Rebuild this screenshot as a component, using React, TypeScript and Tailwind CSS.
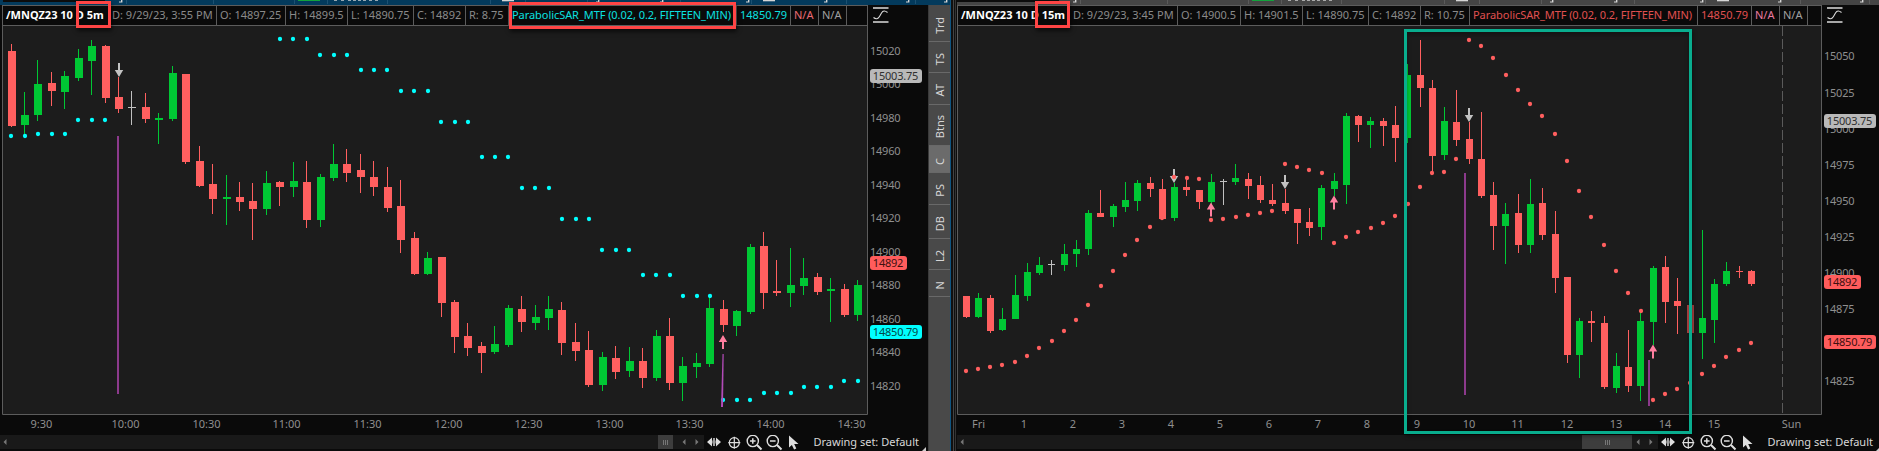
import React from "react";

type Candle = [number, "R" | "G" | "N", number, number, number, number];
type Point = [number, number];

const COLORS = { R: "#ff5f5f", G: "#00c734", N: "#c0c0c0" };

const leftCandles: Candle[] = [
  [8, "R", 51, 126, 44, 127], [21, "G", 115, 125, 92, 134], [34, "G", 84, 115, 60, 121], [48, "R", 83, 91, 72, 106],
  [61, "G", 76, 92, 71, 109], [75, "G", 58, 78, 49, 81], [88, "G", 46, 61, 40, 95], [102, "R", 46, 98, 45, 103],
  [115, "R", 97, 109, 77, 113], [128, "N", 107, 108, 91, 125], [142, "R", 107, 119, 93, 123], [155, "G", 118, 120, 113, 144],
  [169, "G", 73, 119, 66, 121], [182, "R", 74, 162, 74, 164], [196, "R", 161, 186, 146, 187], [209, "R", 184, 199, 164, 214],
  [223, "G", 197, 199, 175, 225], [236, "R", 197, 202, 182, 211], [249, "R", 201, 209, 183, 240], [263, "G", 183, 209, 171, 215],
  [276, "R", 182, 187, 181, 206], [290, "G", 181, 187, 162, 197], [303, "R", 182, 220, 161, 228], [317, "G", 177, 220, 174, 227],
  [330, "G", 164, 178, 144, 181], [343, "R", 164, 173, 149, 182], [357, "R", 170, 177, 154, 193], [370, "R", 177, 187, 161, 196],
  [384, "R", 187, 208, 167, 212], [397, "R", 206, 240, 180, 253], [411, "R", 238, 274, 232, 275], [424, "G", 258, 274, 252, 275],
  [438, "R", 257, 303, 257, 317], [451, "R", 302, 337, 300, 353], [464, "R", 336, 348, 323, 356], [478, "R", 346, 353, 342, 373],
  [491, "G", 344, 352, 326, 354], [505, "G", 308, 345, 305, 347], [518, "R", 309, 322, 296, 332], [532, "G", 317, 323, 305, 330],
  [545, "G", 309, 318, 296, 330], [558, "R", 310, 343, 302, 355], [572, "R", 342, 351, 323, 361], [585, "R", 350, 385, 331, 387],
  [599, "G", 357, 385, 352, 391], [612, "R", 358, 372, 346, 379], [626, "G", 361, 371, 347, 377], [639, "R", 361, 378, 348, 388],
  [653, "G", 336, 378, 330, 381], [666, "R", 336, 383, 318, 390], [679, "G", 366, 383, 357, 401], [693, "G", 363, 367, 353, 378],
  [706, "G", 308, 364, 297, 367], [720, "R", 309, 325, 300, 332], [733, "G", 311, 326, 310, 336], [747, "G", 247, 312, 244, 314],
  [760, "R", 246, 293, 232, 309], [773, "R", 291, 293, 260, 296], [787, "G", 285, 293, 248, 307], [800, "G", 278, 286, 258, 295],
  [814, "R", 277, 292, 273, 295], [827, "G", 289, 291, 278, 322], [841, "R", 289, 315, 284, 317], [854, "G", 285, 315, 280, 321],
];

const rightCandles: Candle[] = [
  [963, "R", 296, 317, 296, 318], [975, "G", 298, 317, 293, 318], [987, "R", 298, 331, 295, 333], [999, "G", 319, 330, 308, 331],
  [1012, "G", 295, 319, 275, 319], [1024, "G", 272, 296, 263, 301], [1036, "G", 265, 273, 257, 275], [1048, "N", 264, 265, 260, 275],
  [1061, "G", 254, 265, 244, 271], [1073, "G", 249, 254, 240, 267], [1085, "G", 213, 249, 210, 255], [1097, "R", 213, 217, 190, 217],
  [1110, "G", 206, 217, 204, 227], [1122, "G", 200, 207, 182, 212], [1134, "G", 183, 201, 180, 211], [1147, "R", 183, 189, 177, 197],
  [1159, "R", 189, 219, 179, 220], [1171, "G", 187, 218, 183, 221], [1183, "R", 187, 190, 180, 196], [1196, "R", 190, 202, 190, 209],
  [1208, "G", 182, 202, 174, 205], [1220, "N", 181, 182, 179, 205], [1232, "G", 178, 182, 164, 185], [1245, "R", 179, 186, 173, 199],
  [1257, "R", 185, 200, 176, 203], [1269, "R", 200, 204, 184, 206], [1282, "R", 203, 211, 189, 214], [1294, "R", 209, 223, 209, 244],
  [1306, "R", 222, 228, 208, 236], [1318, "G", 188, 227, 185, 240], [1331, "G", 181, 189, 173, 196], [1343, "G", 116, 185, 113, 204],
  [1355, "R", 116, 125, 115, 142], [1367, "G", 121, 125, 117, 148], [1380, "R", 121, 126, 118, 146], [1392, "R", 125, 138, 106, 162],
  [1404, "G", 75, 138, 64, 143], [1417, "R", 75, 88, 40, 107], [1429, "R", 88, 156, 80, 173], [1441, "G", 121, 155, 107, 160],
  [1453, "R", 122, 140, 90, 146], [1466, "R", 139, 159, 122, 164], [1478, "R", 159, 196, 112, 198], [1490, "R", 195, 226, 182, 250],
  [1502, "G", 214, 226, 203, 264], [1515, "R", 213, 245, 194, 253], [1527, "G", 204, 245, 179, 253], [1539, "R", 203, 235, 188, 240],
  [1552, "R", 234, 278, 211, 293], [1564, "R", 277, 355, 277, 363], [1576, "G", 321, 355, 318, 378], [1588, "R", 321, 323, 311, 342],
  [1601, "R", 323, 387, 316, 389], [1613, "G", 366, 388, 353, 393], [1625, "R", 367, 386, 330, 392], [1637, "G", 321, 386, 311, 401],
  [1650, "G", 268, 322, 266, 345], [1662, "R", 267, 302, 256, 323], [1674, "R", 301, 306, 278, 334], [1687, "R", 305, 333, 305, 333],
  [1699, "G", 318, 333, 230, 359], [1711, "G", 284, 320, 279, 343], [1723, "G", 271, 284, 262, 286], [1736, "R", 271, 272, 266, 278],
  [1748, "R", 271, 284, 270, 286],
];

const leftDots: Point[] = [
  [11, 136], [25, 136], [38, 134], [52, 134], [65, 134], [78, 120], [92, 120], [105, 120],
  [280, 39], [293, 39], [307, 39], [320, 55], [334, 55], [347, 55], [361, 70], [374, 70], [387, 70],
  [401, 91], [414, 91], [428, 91], [441, 122], [455, 122], [468, 122], [482, 157], [495, 157], [508, 157],
  [522, 188], [535, 188], [549, 188], [562, 219], [576, 219], [589, 219], [602, 250], [616, 250], [629, 250],
  [643, 275], [656, 275], [670, 275], [683, 296], [697, 296], [710, 296], [723, 400], [737, 400], [750, 400],
  [764, 393], [777, 393], [791, 393], [804, 387], [817, 387], [831, 387], [844, 381], [858, 381],
];

const rightDots: Point[] = [
  [966, 371], [978, 369], [990, 367], [1002, 365], [1015, 362], [1027, 356], [1039, 348], [1052, 341], [1064, 331],
  [1076, 320], [1088, 305], [1101, 286], [1113, 271], [1125, 255], [1137, 240], [1150, 227], [1162, 218], [1174, 177],
  [1187, 178], [1199, 179], [1211, 220], [1223, 219], [1236, 217], [1248, 215], [1260, 213], [1272, 211], [1285, 164],
  [1297, 167], [1309, 170], [1322, 173], [1334, 243], [1346, 237], [1358, 232], [1371, 228], [1383, 223], [1395, 216],
  [1408, 204], [1420, 187], [1432, 173], [1444, 172], [1456, 159], [1469, 40], [1481, 46], [1493, 58], [1506, 75],
  [1518, 90], [1530, 104], [1542, 116], [1555, 134], [1567, 161], [1579, 191], [1591, 217], [1604, 245], [1616, 271],
  [1628, 293], [1641, 311], [1653, 400], [1665, 394], [1677, 389], [1690, 383], [1702, 374], [1714, 366], [1726, 357],
  [1739, 350], [1751, 343],
];

function Candles({ data, width }: { data: Candle[]; width: number }) {
  return (
    <g shapeRendering="crispEdges">
      {data.map(([x, c, top, bottom, high, low]) => (
        <g key={x} fill={COLORS[c]}>
          <rect x={x + 3} y={high} width={1} height={low - high} />
          <rect x={x} y={top} width={width} height={bottom - top} />
        </g>
      ))}
    </g>
  );
}

function Dots({ data, color }: { data: Point[]; color: string }) {
  return (
    <g fill={color}>
      {data.map(([x, y]) => (
        <circle key={x} cx={x} cy={y} r={2.15} />
      ))}
    </g>
  );
}

function DownArrow({ x, y }: { x: number; y: number }) {
  return <path d={`M${x - 1} ${y}h2v7h3.200l-4.200 7l-4.200 -7h3.200z`} fill="#c2c2c2" />;
}

function UpArrow({ x, y }: { x: number; y: number }) {
  return <path d={`M${x} ${y}l4.200 7h-3.200v7h-2v-7h-3.200z`} fill="#ff7f9f" />;
}

function ScaleIcon({ x }: { x: number }) {
  return (
    <g stroke="#dcdcdc" fill="none">
      <path d={`M${x} 8h15.500M${x} 22h15.500`} strokeWidth={1.6} />
      <path d={`M${x + 0.5} 17.500c2.500 2 4.500 1.500 6 -1l2 -3.500c1.500 -2.500 3.500 -2.500 6 -0.500`} strokeWidth={1.1} />
    </g>
  );
}

function Badge({ x, y, w, fill, color, text }: { x: number; y: number; w: number; fill: string; color: string; text: string }) {
  return (
    <g>
      <rect x={x} y={y} width={w} height={14} rx={3} fill={fill} />
      <text x={x + 2.8} y={y + 11} fill={color} textLength={w - 6.4} lengthAdjust="spacing">
        {text}
      </text>
    </g>
  );
}

function AxisLabels({ x, labels }: { x: number; labels: [string, number][] }) {
  return (
    <g fill="#8f8f8f">
      {labels.map(([t, y]) => (
        <text key={t} x={x} y={y + 4} textLength={30.5} lengthAdjust="spacing">
          {t}
        </text>
      ))}
    </g>
  );
}

function TimeLabels({ labels }: { labels: [string, number][] }) {
  return (
    <g fill="#8f8f8f" textAnchor="middle">
      {labels.map(([t, x]) => (
        <text key={t} x={x} y={428}>
          {t}
        </text>
      ))}
    </g>
  );
}

const chartText = "block shrink-0 font-['Noto_Sans','Open_Sans',sans-serif] text-[11px]";

function LeftChart() {
  return (
    <svg className={chartText} width={928} height={409} viewBox="0 26 928 409">
      <rect x={2} y={26} width={865} height={388} fill="#1c1c1c" />
      <path d="M2.500 26V414.500H867.500V26" fill="none" stroke="#5c5c5c" />
      <Candles data={leftCandles} width={8} />
      <rect x={117} y={136} width={2} height={258} fill="#8c3a8c" />
      <Dots data={leftDots} color="#00ffff" />
      <path d="M722.500 354h1.200l-.7 53h-2z" fill="#b24bb8" />
      <DownArrow x={119} y={63} />
      <UpArrow x={723} y={335} />
      <AxisLabels
        x={870}
        labels={[["15020", 51], ["15000", 84], ["14980", 118], ["14960", 151], ["14940", 185], ["14920", 218], ["14900", 252], ["14880", 285], ["14860", 319], ["14840", 352], ["14820", 386]]}
      />
      <Badge x={870} y={69} w={52} fill="#b9b9b9" color="#303030" text="15003.75" />
      <Badge x={870} y={256} w={37} fill="#ff5c5c" color="#401010" text="14892" />
      <Badge x={870} y={325} w={52} fill="#00ffff" color="#004848" text="14850.79" />
      <TimeLabels
        labels={[["9:30", 41.5], ["10:00", 125.5], ["10:30", 206.5], ["11:00", 286.5], ["11:30", 367.5], ["12:00", 448.5], ["12:30", 528.5], ["13:00", 609.5], ["13:30", 689.5], ["14:00", 770.5], ["14:30", 851.5]]}
      />
    </svg>
  );
}

function RightChart() {
  return (
    <svg className={chartText} width={922} height={409} viewBox="957 26 922 409">
      <rect x={957} y={26} width={865} height={388} fill="#1c1c1c" />
      <path d="M957.500 26V414.500H1821.500V26" fill="none" stroke="#5c5c5c" />
      <path d="M1782.500 26V414" stroke="#5a5a5a" strokeDasharray="10 3" />
      <Candles data={rightCandles} width={7} />
      <rect x={1687} y={305} width={2} height={28} fill="#b04444" />
      <rect x={1692} y={305} width={2} height={28} fill="#b04444" />
      <rect x={1464} y={173} width={2} height={222} fill="#8c3a8c" />
      <rect x={1648} y={360} width={2} height={46} fill="#8c3a8c" />
      <DownArrow x={1174} y={169} />
      <DownArrow x={1285} y={175} />
      <DownArrow x={1469} y={108} />
      <Dots data={rightDots} color="#ff5f5f" />
      <UpArrow x={1211} y={202.5} />
      <UpArrow x={1334} y={195.5} />
      <UpArrow x={1653} y={344.5} />
      <AxisLabels
        x={1824}
        labels={[["15050", 56], ["15025", 93], ["15000", 129], ["14975", 165], ["14950", 201], ["14925", 237], ["14900", 273], ["14875", 309], ["14825", 381]]}
      />
      <Badge x={1824} y={114} w={52} fill="#b9b9b9" color="#303030" text="15003.75" />
      <Badge x={1824} y={275} w={37} fill="#ff5c5c" color="#401010" text="14892" />
      <Badge x={1824} y={335} w={52} fill="#ff5c5c" color="#401010" text="14850.79" />
      <TimeLabels
        labels={[["Fri", 978.5], ["1", 1024], ["2", 1073], ["3", 1122], ["4", 1171], ["5", 1220], ["6", 1269], ["7", 1318], ["8", 1367], ["9", 1417], ["10", 1469], ["11", 1517.5], ["12", 1567], ["13", 1616], ["14", 1665], ["15", 1714], ["Sun", 1791.5]]}
      />
    </svg>
  );
}

function Cell({ w, color = "text-[#8a8a8a]", children }: { w: string; color?: string; children?: React.ReactNode }) {
  return <div className={`${w} ${color} h-full shrink-0 border-r border-[#5c5c5c] pl-[3px] leading-[18px] whitespace-nowrap`}>{children}</div>;
}

const headerRow = "flex h-[21px] shrink-0 border-y border-l border-[#5c5c5c] bg-[#0a0a0a] text-[11px]";

function LeftHeader() {
  return (
    <div className="flex h-[21px] bg-[#0a0a0a] pl-[2px]">
      <div className={`${headerRow} w-[866px] border-r`}>
        <div className="w-[109px] pl-[3px] font-bold leading-[18px] text-white whitespace-pre">/MNQZ23 10 D 5m</div>
        <div className="w-[105px] border-r border-[#5c5c5c] leading-[18px] text-[#8a8a8a] whitespace-nowrap">D: 9/29/23, 3:55 PM</div>
        <Cell w="w-[69px]">O: 14897.25</Cell>
        <Cell w="w-[62px]">H: 14899.5</Cell>
        <Cell w="w-[66px]">L: 14890.75</Cell>
        <Cell w="w-[52px]">C: 14892</Cell>
        <Cell w="w-[43px]">R: 8.75</Cell>
        <Cell w="w-[228px] tracking-[-0.06px]" color="text-[#0be0e0]">ParabolicSAR_MTF (0.02, 0.2, FIFTEEN_MIN)</Cell>
        <Cell w="w-[54px]" color="text-[#0be0e0]">14850.79</Cell>
        <Cell w="w-[28px]" color="text-[#ea6a74]">N/A</Cell>
        <Cell w="w-[28px]" color="text-[#a0a0a0]">N/A</Cell>
      </div>
      <svg width={60} height={21} viewBox="868 5 60 21" className="block">
        <ScaleIcon x={873} />
      </svg>
    </div>
  );
}

function RightHeader() {
  return (
    <div className="flex h-[21px] bg-[#0a0a0a]">
      <div className={`${headerRow} w-[865px] border-r`}>
        <div className="w-[115px] pl-[3px] font-bold leading-[18px] text-white whitespace-pre">/MNQZ23 10 D 15m</div>
        <div className="w-[105px] border-r border-[#5c5c5c] leading-[18px] text-[#8a8a8a] whitespace-nowrap">D: 9/29/23, 3:45 PM</div>
        <Cell w="w-[63px]">O: 14900.5</Cell>
        <Cell w="w-[62px]">H: 14901.5</Cell>
        <Cell w="w-[66px]">L: 14890.75</Cell>
        <Cell w="w-[52px]">C: 14892</Cell>
        <Cell w="w-[49px]">R: 10.75</Cell>
        <Cell w="w-[228px] tracking-[-0.06px]" color="text-[#e05050]">ParabolicSAR_MTF (0.02, 0.2, FIFTEEN_MIN)</Cell>
        <Cell w="w-[54px]" color="text-[#e05050]">14850.79</Cell>
        <Cell w="w-[28px]" color="text-[#ea7aa0]">N/A</Cell>
        <Cell w="w-[28px]" color="text-[#a0a0a0]">N/A</Cell>
      </div>
      <svg width={57} height={21} viewBox="1822 5 57 21" className="block">
        <ScaleIcon x={1827} />
      </svg>
    </div>
  );
}

function Tools() {
  return (
    <svg width={100} height={16} viewBox="704 435 100 16" className="block shrink-0">
      <g fill="#dedede">
        <path d="M707 442l5 -4.500v9zM721 442l-5 -4.500v9z" />
        <path d="M711.500 440.500h1v3h-1zM713.300 438h1.400v8h-1.400zM715.500 440.500h1v3h-1z" />
        <path d="M789 435.500v12l2.900 -2.500l2.200 4.500l2.200 -1l-2.100 -4.400h4.300z" />
      </g>
      <g fill="none" stroke="#dedede" strokeWidth={1.2}>
        <circle cx={734.3} cy={442.7} r={5} />
        <path d="M728.300 442.700h12M734.300 436.700v12" />
        <circle cx={752.8} cy={441} r={5.6} strokeWidth={1.4} />
        <circle cx={772.8} cy={441} r={5.6} strokeWidth={1.4} />
        <path d="M757 445l4.500 4.500M777 445l4.500 4.500" strokeWidth={2} />
        <path d="M750 441h5.600M752.800 438.200v5.600M770 441h5.600" strokeWidth={1.5} />
      </g>
    </svg>
  );
}

function Arrow({ flip }: { flip?: boolean }) {
  return (
    <svg width={4} height={6} viewBox="0 0 4 6" className="block shrink-0">
      <path d={flip ? "M0.500 0v6L3.500 3z" : "M3.500 0v6L0.500 3z"} fill="#777" />
    </svg>
  );
}

function Grip() {
  return (
    <div className="flex gap-[1px]">
      <i className="h-[5px] w-px bg-[#777]" />
      <i className="h-[5px] w-px bg-[#777]" />
      <i className="h-[5px] w-px bg-[#777]" />
    </div>
  );
}

function BottomBar({ track, thumb, arrows }: { track: string; thumb: string; arrows: string }) {
  return (
    <div className="flex h-[16px] shrink-0 bg-[#0a0a0a]">
      <div className="flex h-[14px] shrink-0 items-center bg-[#191919]">
        <div className={`${track} pl-[3px]`}><Arrow /></div>
        <div className={`${thumb} flex h-[14px] items-center justify-center bg-[#3d3d3d]`}><Grip /></div>
        <div className={`${arrows} flex gap-[9px]`}><Arrow /><Arrow flip /></div>
      </div>
      <Tools />
      <div className="w-[118px] shrink-0 pl-[9.500px] text-[11px] leading-[14px] text-[#d8d8d8] whitespace-nowrap">Drawing set: Default</div>
      <svg width={5} height={16} viewBox="0 0 5 16" className="block shrink-0">
        <path d="M4 12v4H0z" fill="#ccc" />
      </svg>
    </div>
  );
}

function Tab({ h, label, active }: { h: string; label: string; active?: boolean }) {
  return (
    <div className={`${h} flex items-center justify-center border-b border-[#696969] pt-[4px] ${active ? "bg-[#6b6b6b]" : "bg-[#494949]"}`}>
      <span className="rotate-180 text-[11px] leading-[14px] text-[#d6d6d6] [writing-mode:vertical-rl]">{label}</span>
    </div>
  );
}

function TopEdge({ x0, w, right }: { x0: number; w: number; right?: boolean }) {
  const d = right ? 954 : 0;
  return (
    <svg width={w} height={5} viewBox={`${x0} 0 ${w} 5`} className="block shrink-0">
      <rect x={x0} width={w} height={5} fill={right ? "#454545" : "#033a5c"} />
      <rect x={d + 3} width={102} height={2} fill="#0c0c0c" />
      <g fill={right ? "#5b5b5b" : "#1c5172"}>
        {[126, 213, 294, 327, 387, 490, 525, 587, 680, 751, 846, 915].map((x) => (
          <rect key={x} x={d + x} width={1} height={4} />
        ))}
      </g>
      <rect x={d + 298} width={22} height={1} fill="#12a33c" />
      <g fill="#d5d5d5">
        {[119, 596, 660, 746, 824, 906, 944].filter((x) => d + x < 1875).map((x) => (
          <path key={x} d={`M${d + x + 2} 0h1.400v2.500h-3.400v-1h2z`} />
        ))}
        <rect x={d + 502} width={12} height={1.3} />
        <rect x={d + 763} width={12} height={1.3} />
        {[334, 341, 348, 353, 358, 363, 369, 375].map((x) => (
          <rect key={x} x={d + x} width={3} height={1} opacity={0.7} />
        ))}
      </g>
    </svg>
  );
}

const redBox = "absolute border-[#ff4545] shadow-[1px_3px_4px_rgba(0,0,0,0.55)]";

export default function App() {
  return (
    <div className="relative flex h-[451px] w-[1879px] overflow-hidden bg-[#0a0a0a] font-['Noto_Sans','Open_Sans',sans-serif]">
      <div className="flex w-[950px] shrink-0 flex-col">
        <TopEdge x0={0} w={950} />
        <div className="flex">
          <div className="flex w-[928px] flex-col">
            <LeftHeader />
            <LeftChart />
            <BottomBar track="w-[658px]" thumb="w-[15px]" arrows="w-[31px] pl-[9px]" />
          </div>
          <div className="h-[446px] w-[22px] border-l border-[#3a3a3a] bg-[#494949]">
            <Tab h="h-[37px]" label="Trd" />
            <Tab h="h-[31px]" label="TS" />
            <Tab h="h-[32px]" label="AT" />
            <Tab h="h-[41px]" label="Btns" />
            <Tab h="h-[27px]" label="C" active />
            <Tab h="h-[32px]" label="PS" />
            <Tab h="h-[34px]" label="DB" />
            <Tab h="h-[31px]" label="L2" />
            <Tab h="h-[27px]" label="N" />
          </div>
        </div>
      </div>
      <div className="flex h-full w-[7px] shrink-0">
        <div className="w-[1px] bg-[#0f5480]" />
        <div className="w-[2px] bg-[#101010]" />
        <div className="w-[1px] bg-[#444]" />
        <div className="w-[1px] bg-[#101010]" />
        <div className="w-[1px] bg-[#333]" />
        <div className="w-[1px] bg-[#0c0c0c]" />
      </div>
      <div className="flex w-[922px] shrink-0 flex-col">
        <TopEdge x0={957} w={922} right />
        <RightHeader />
        <RightChart />
        <BottomBar track="w-[625px]" thumb="w-[50px]" arrows="w-[26px] pl-[4px]" />
      </div>
      <div className={`${redBox} top-[1px] left-[76px] h-[27px] w-[35px] border-[3px]`} />
      <div className={`${redBox} top-[2px] left-[509px] h-[27px] w-[227px] border-[3px]`} />
      <div className={`${redBox} top-[1px] left-[1035px] h-[27px] w-[35px] border-[3px]`} />
      <div className="absolute top-[29px] left-[1404px] h-[405px] w-[288px] border-[3px] border-[#09ad8e] shadow-[inset_0_3px_4px_rgba(0,0,0,0.3),1px_2px_4px_rgba(0,0,0,0.4)]" />
    </div>
  );
}
